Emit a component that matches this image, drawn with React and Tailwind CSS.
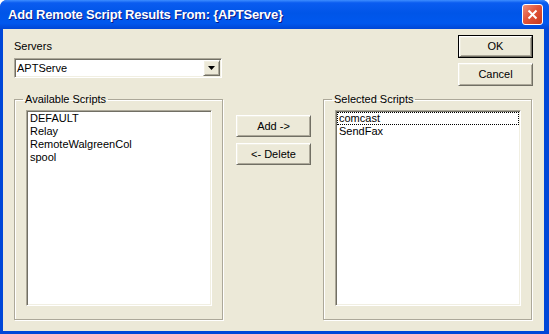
import React from "react";

const raised =
  "border border-t-white border-l-white border-r-[#716F64] border-b-[#716F64] shadow-[inset_1px_1px_0_#F1EFE2,inset_-1px_-1px_0_#ACA899] bg-[#ECE9D8]";
const sunken =
  "border border-t-[#ACA899] border-l-[#ACA899] border-r-white border-b-white shadow-[inset_1px_1px_0_#716F64,inset_-1px_-1px_0_#F1EFE2]";

function Button({ label, isDefault, className = "" }) {
  if (isDefault) {
    return (
      <div className={"border border-black " + className}>
        <div className={raised + " flex h-full w-full items-center justify-center"}>
          {label}
        </div>
      </div>
    );
  }
  return (
    <div className={raised + " flex items-center justify-center " + className}>
      {label}
    </div>
  );
}

function ListBox({ items, focused }) {
  return (
    <div className={sunken + " mt-[4px] ml-[11px] h-[196px] w-[186px] bg-white p-[1px]"}>
      {items.map((item, i) => (
        <div
          key={item}
          className={
            "h-[13px] border pl-[1px] leading-[11px] " +
            (i === focused ? "border-dotted border-black" : "border-transparent")
          }
        >
          {item}
        </div>
      ))}
    </div>
  );
}

function GroupBox({ title, items, focused, className = "" }) {
  return (
    <fieldset
      className={
        "h-[227px] w-[209px] border border-[#ACA899] shadow-[inset_1px_1px_0_white,1px_1px_0_white] " +
        className
      }
    >
      <legend className="ml-[8px] px-[2px] leading-[13px]">{title}</legend>
      <ListBox items={items} focused={focused} />
    </fieldset>
  );
}

export default function App() {
  return (
    <div
      className="flex h-[334px] w-[549px] flex-col overflow-hidden rounded-t-[7px] bg-[#0047D8] text-[11px] text-black"
      style={{ fontFamily: '"Liberation Sans", Arial, sans-serif' }}
    >
      {/* Title bar */}
      <div className="flex h-[29px] shrink-0 items-center justify-between bg-[linear-gradient(to_bottom,#3D8DFF_0%,#0A5CF0_10%,#0055E8_45%,#0058EE_80%,#0046D5_100%)] pl-[8px] pr-[6px]">
        <span className="text-[13px] font-bold tracking-[-0.2px] text-white [text-shadow:1px_1px_0_#0A1883]">
          Add Remote Script Results From: {"{APTServe}"}
        </span>
        <div className="flex h-[21px] w-[21px] items-center justify-center rounded-[3px] border border-white bg-[linear-gradient(135deg,#F0907A_0%,#E2553A_45%,#C8391E_100%)]">
          <svg width="11" height="11" viewBox="0 0 11 11">
            <path d="M1.5 1.5 L9.5 9.5 M9.5 1.5 L1.5 9.5" stroke="white" strokeWidth="2" />
          </svg>
        </div>
      </div>

      {/* Body */}
      <div className="mb-[3px] ml-[3px] mr-[5px] flex flex-1 flex-col bg-[#ECE9D8] pl-[11px] pr-[11px]">
        <div className="flex items-start justify-between">
          <div className="pt-[11px]">
            <div className="leading-[13px]">Servers</div>
            <div className={sunken + " mt-[5px] flex h-[20px] w-[208px] items-center bg-white p-[1px]"}>
              <span className="flex-1 pl-[1px] leading-[16px]">APTServe</span>
              <div className={raised + " flex h-[16px] w-[17px] items-center justify-center"}>
                <svg width="7" height="4" viewBox="0 0 7 4">
                  <path d="M0 0 H7 L3.5 4 Z" fill="black" />
                </svg>
              </div>
            </div>
          </div>
          <div className="flex flex-col pt-[6px]">
            <Button label="OK" isDefault className="h-[23px] w-[75px]" />
            <Button label="Cancel" className="mt-[5px] h-[23px] w-[75px]" />
          </div>
        </div>

        <div className="mt-[7px] flex items-start">
          <GroupBox
            title="Available Scripts"
            items={["DEFAULT", "Relay", "RemoteWalgreenCol", "spool"]}
          />
          <div className="ml-[13px] mt-[22px] flex flex-col gap-[6px]">
            <Button label="Add ->" className="h-[22px] w-[75px]" />
            <Button label="<- Delete" className="h-[22px] w-[75px]" />
          </div>
          <GroupBox
            title="Selected Scripts"
            items={["comcast", "SendFax"]}
            focused={0}
            className="ml-auto mr-[1px]"
          />
        </div>
      </div>
    </div>
  );
}
